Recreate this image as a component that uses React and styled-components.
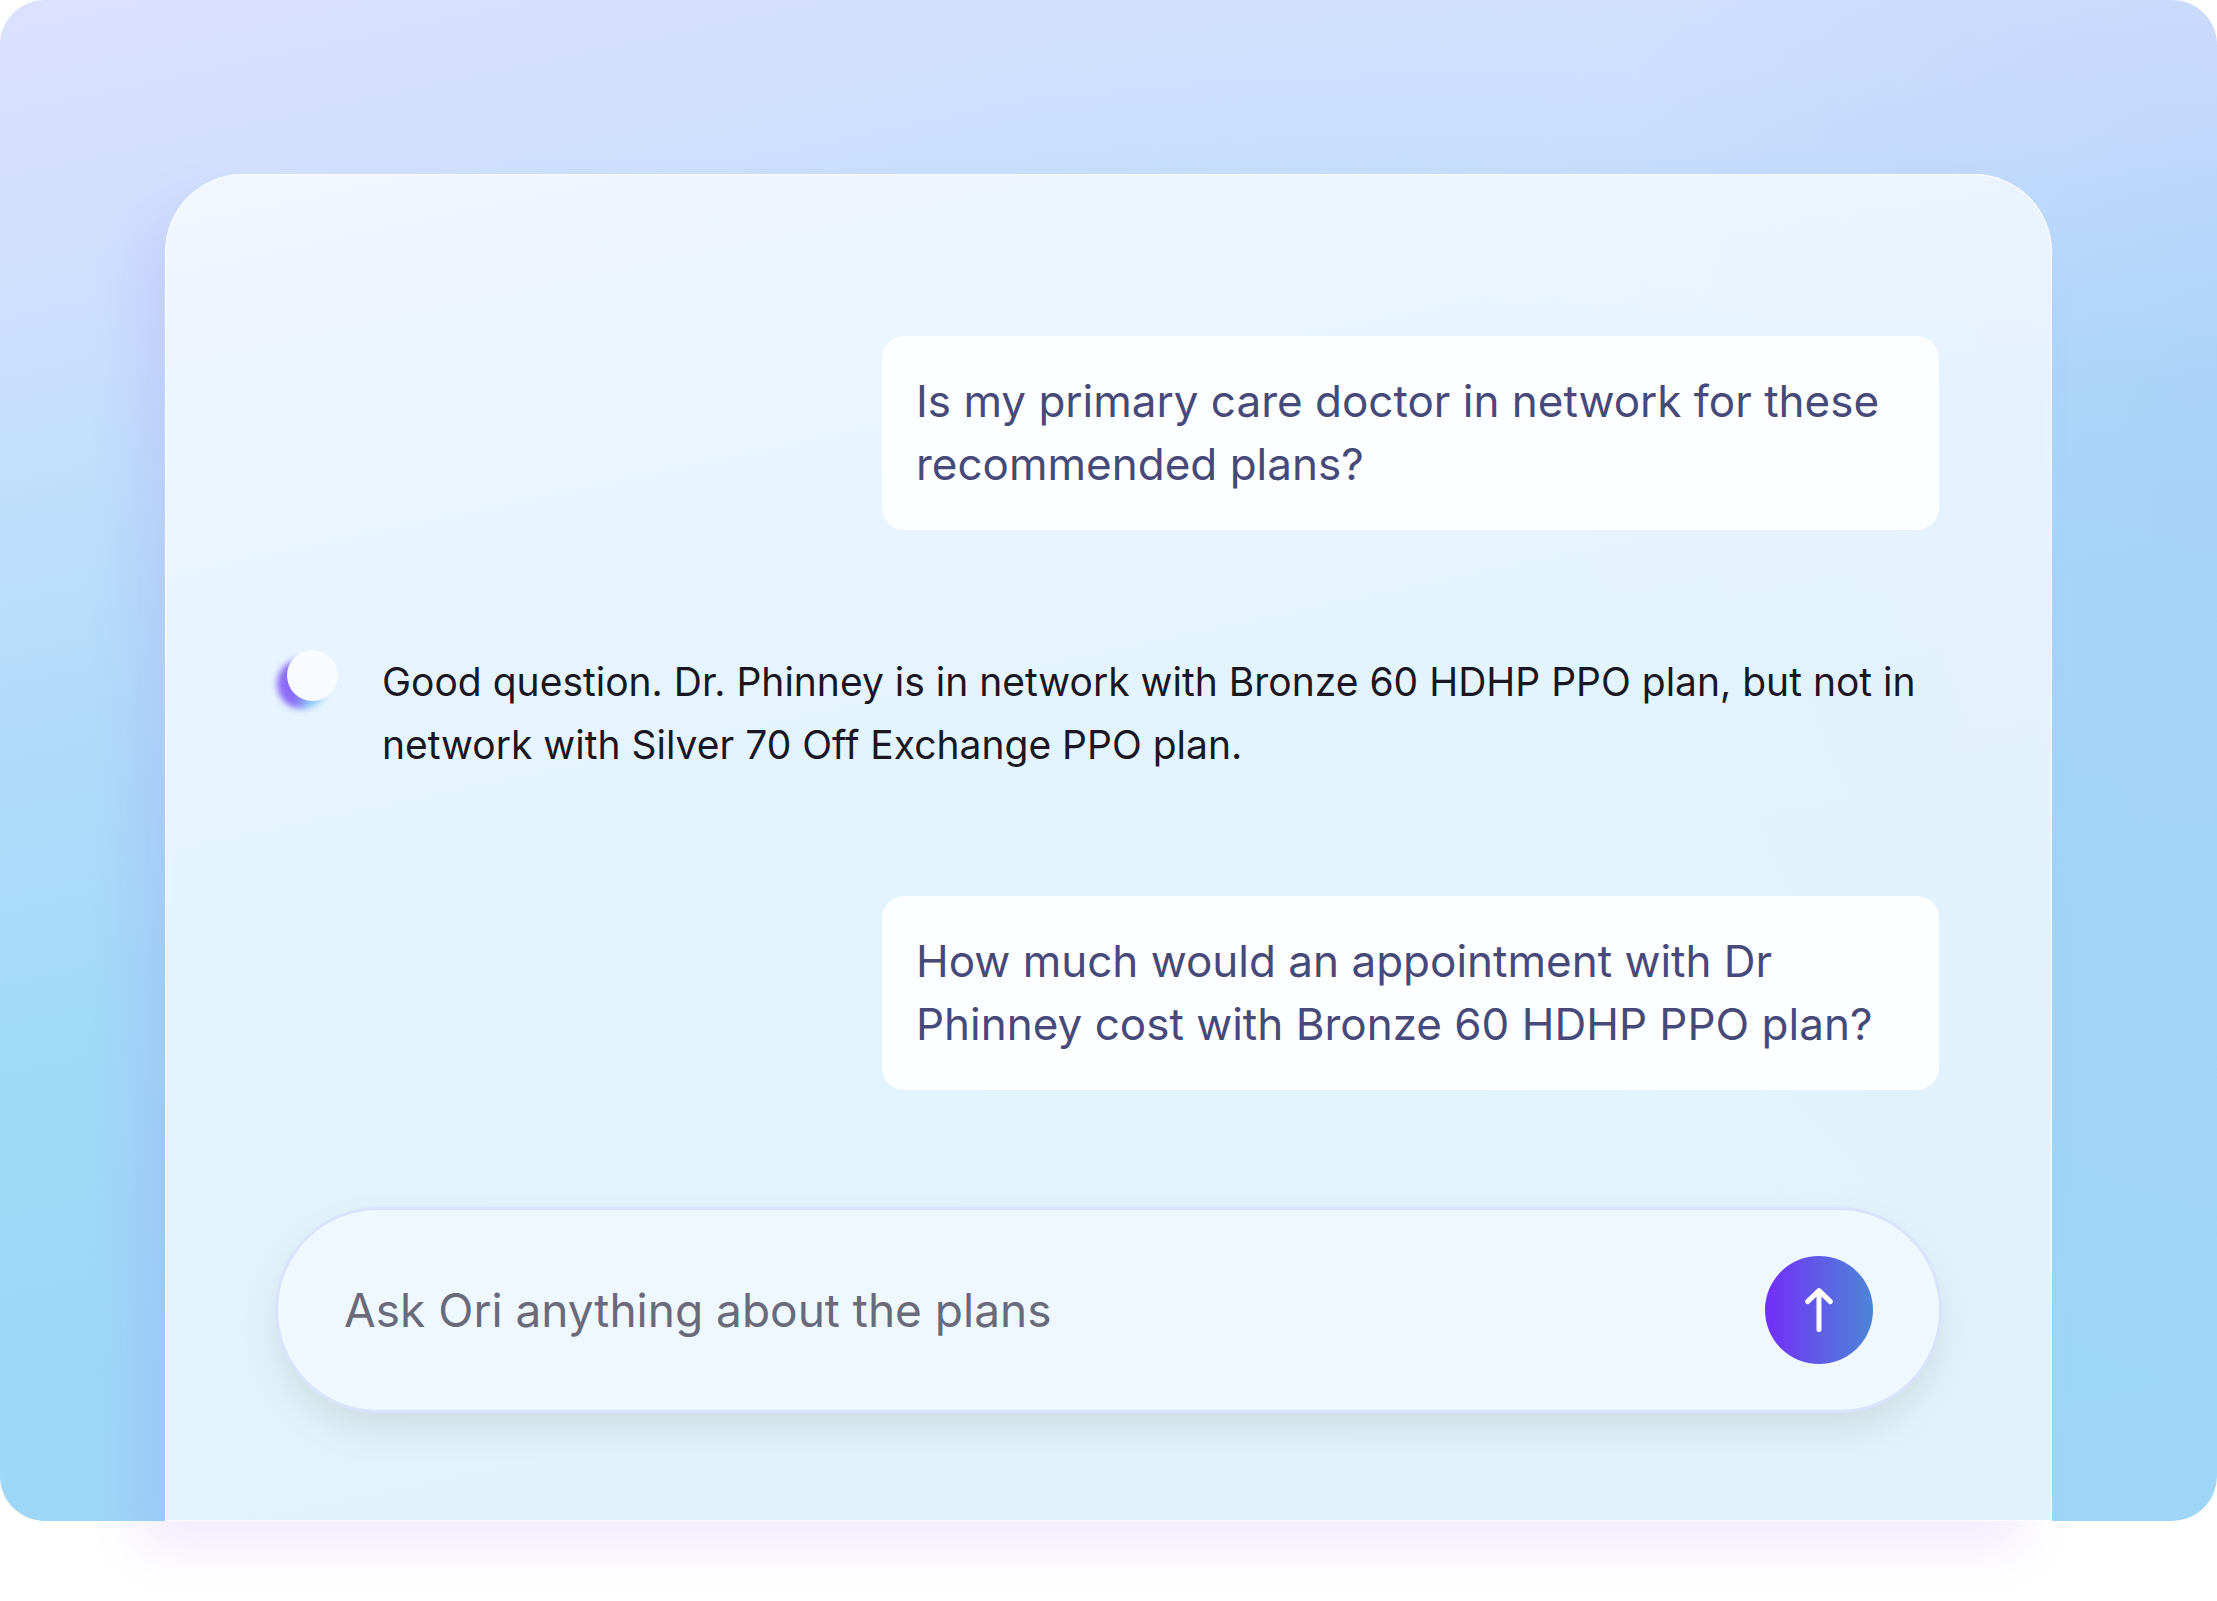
import React, { useState } from "react";
import styled, { createGlobalStyle } from "styled-components";

const GlobalStyle = createGlobalStyle`
  *, *::before, *::after { box-sizing: border-box; }
  body {
    margin: 0;
    background: #ffffff;
    font-family: Inter, "Liberation Sans", sans-serif;
    font-weight: 400;
  }
`;

const Page = styled.div`
  padding-bottom: 80px;
`;

const Stage = styled.main`
  padding: 174px 165px 0;
  border-radius: 45px;
  background:
    radial-gradient(ellipse 34% 60% at 104% 32%, rgba(172, 202, 250, 0.5), rgba(172, 202, 250, 0) 100%),
    radial-gradient(ellipse 55% 25% at 100% 0%, rgba(214, 223, 253, 0.85), rgba(214, 223, 253, 0) 100%),
    linear-gradient(168deg, #dce1fe 0%, #d0e0fd 13%, #c2dffb 24%, #b0dbfa 38%, #a2daf9 52%, #9ed7f8 70%, #9fd6f8 100%);
`;

const Panel = styled.section`
  display: flex;
  flex-direction: column;
  gap: 120px;
  padding: 162px 113px 111px;
  border-radius: 78px 78px 0 0;
  background: rgba(255, 255, 255, 0.69);
  box-shadow:
    inset 0 0 0 1px rgba(255, 255, 255, 0.85),
    inset 0 0 30px rgba(255, 255, 255, 0.12),
    -28px 28px 50px rgba(128, 70, 250, 0.1);
`;

const Bubble = styled.p`
  align-self: flex-end;
  width: 100%;
  max-width: 1057px;
  margin: 0;
  padding: 34px;
  border-radius: 22px;
  background: #fdfeff;
  color: #474a78;
  font-size: 44px;
  line-height: 63px;
`;

const Reply = styled.div`
  display: flex;
  align-items: flex-start;
  gap: 44px;
  padding-left: 9px;
`;

const ReplyText = styled.p`
  flex: 1;
  margin: 0;
  color: #1b1722;
  font-size: 39px;
  line-height: 63px;
`;

const Avatar = styled.svg`
  flex: none;
  width: 51px;
  height: 51px;
  overflow: visible;
`;

const Composer = styled.form`
  display: flex;
  align-items: center;
  gap: 32px;
  height: 200px;
  padding: 0 66px;
  border-radius: 100px;
  background: #f0f8ff;
  box-shadow:
    0 0 0 3px #d9e3fd,
    0 18px 36px rgba(100, 110, 80, 0.16);
`;

const Prompt = styled.input`
  flex: 1;
  min-width: 0;
  height: 64px;
  padding: 0;
  border: 0;
  outline: 0;
  background: transparent;
  color: #6a6a7a;
  font: 400 46px Inter, "Liberation Sans", sans-serif;

  &::placeholder {
    color: #6a6a7a;
    opacity: 1;
  }
`;

const SendButton = styled.button`
  display: grid;
  place-items: center;
  flex: none;
  width: 108px;
  height: 108px;
  padding: 0;
  border: 0;
  border-radius: 50%;
  background: linear-gradient(90deg, #7131f8 6%, #5f5ee6 52%, #4c85d8 100%);
  cursor: pointer;
`;

function OriAvatar() {
  return (
    <Avatar viewBox="0 0 51 51" aria-hidden="true">
      <defs>
        <linearGradient id="halo" x1="0" y1="0.5" x2="1" y2="0.62">
          <stop offset="0.38" stopColor="#8a6cf8" />
          <stop offset="0.72" stopColor="#8ccdf7" />
        </linearGradient>
        <filter id="soft" x="-40%" y="-40%" width="180%" height="180%">
          <feGaussianBlur stdDeviation="3" />
        </filter>
      </defs>
      <circle cx="15" cy="34" r="25" fill="url(#halo)" filter="url(#soft)" />
      <circle cx="25.5" cy="25.5" r="25.5" fill="#f8fbff" />
    </Avatar>
  );
}

function ArrowUp() {
  return (
    <svg width="30" height="46" viewBox="0 0 30 46" fill="none" aria-hidden="true">
      <path
        d="M15 42.5V4M3.6 14.6 15 3.6l11.4 11"
        stroke="#ffffff"
        strokeWidth="5"
        strokeLinecap="round"
        strokeLinejoin="round"
      />
    </svg>
  );
}

export default function App() {
  const [question, setQuestion] = useState("");

  return (
    <Page>
      <GlobalStyle />
      <Stage>
        <Panel aria-label="Chat with Ori">
          <Bubble>Is my primary care doctor in network for these recommended plans?</Bubble>
          <Reply>
            <OriAvatar />
            <ReplyText>
              Good question. Dr. Phinney is in network with Bronze 60 HDHP PPO plan, but not in
              network with Silver 70 Off Exchange PPO plan.
            </ReplyText>
          </Reply>
          <Bubble>How much would an appointment with Dr Phinney cost with Bronze 60 HDHP PPO plan?</Bubble>
          <Composer onSubmit={(event) => event.preventDefault()}>
            <Prompt
              type="text"
              aria-label="Ask Ori anything about the plans"
              placeholder="Ask Ori anything about the plans"
              value={question}
              onChange={(event) => setQuestion(event.target.value)}
            />
            <SendButton type="submit" aria-label="Send">
              <ArrowUp />
            </SendButton>
          </Composer>
        </Panel>
      </Stage>
    </Page>
  );
}
